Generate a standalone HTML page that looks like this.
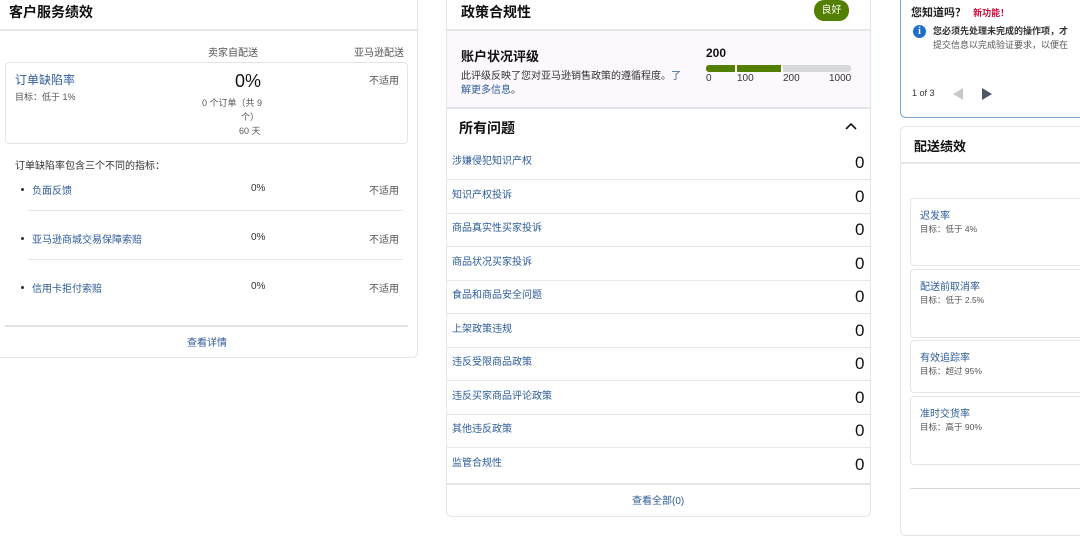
<!DOCTYPE html>
<html><head><meta charset="utf-8"><style>
*{margin:0;padding:0;box-sizing:border-box}
body{width:1080px;height:520px;overflow:hidden;background:#fff;font-family:"Liberation Sans","Noto Sans CJK SC",sans-serif;color:#111;position:relative}
.a{position:absolute;white-space:nowrap}
.card{position:absolute;background:#fff;border:1px solid #e3e6e6;border-radius:6px}
.hl{position:absolute;height:2px;background:#e3e6e6}
.ln{position:absolute;height:1px;background:#e7e7e7}
.lk{color:#2d5c99}
.s{font-size:10px;color:#555}
.t{font-size:14px;font-weight:bold;color:#111}
.box{position:absolute;border:1px solid #e3e6e6;border-radius:4px;background:#fff}
.dot{position:absolute;width:3px;height:3px;border-radius:50%;background:#333}
</style></head><body>

<!-- Left card -->
<div class="card" style="left:-6px;top:-10px;width:424px;height:368px"></div>
<div class="a t" style="left:9px;top:2px">客户服务绩效</div>
<div class="hl" style="left:-6px;top:29px;width:424px"></div>
<div class="a s" style="left:208px;top:44px">卖家自配送</div>
<div class="a s" style="left:354px;top:44px">亚马逊配送</div>
<div class="box" style="left:5px;top:62px;width:403px;height:82px"></div>
<div class="a lk" style="left:15px;top:71px;font-size:12px">订单缺陷率</div>
<div class="a" style="left:15px;top:90px;font-size:9px;color:#555">目标：低于 1%</div>
<div class="a" style="left:235px;top:71px;font-size:18px;color:#111">0%</div>
<div class="a" style="left:202px;top:96px;font-size:9px;color:#555">0 个订单（共 9</div>
<div class="a" style="left:241px;top:110px;font-size:9px;color:#555">个）</div>
<div class="a" style="left:239px;top:124px;font-size:9px;color:#555">60 天</div>
<div class="a s" style="left:369px;top:72px">不适用</div>
<div class="a" style="left:15px;top:157px;font-size:10px;color:#333">订单缺陷率包含三个不同的指标：</div>
<div class="dot" style="left:21px;top:188px"></div>
<div class="a lk" style="left:32px;top:182px;font-size:10px">负面反馈</div>
<div class="a s" style="left:251px;top:183px;color:#333">0%</div>
<div class="a s" style="left:369px;top:182px">不适用</div>
<div class="ln" style="left:28px;top:210px;width:375px"></div>
<div class="dot" style="left:21px;top:237px"></div>
<div class="a lk" style="left:32px;top:231px;font-size:10px">亚马逊商城交易保障索赔</div>
<div class="a s" style="left:251px;top:232px;color:#333">0%</div>
<div class="a s" style="left:369px;top:231px">不适用</div>
<div class="ln" style="left:28px;top:259px;width:375px"></div>
<div class="dot" style="left:21px;top:286px"></div>
<div class="a lk" style="left:32px;top:280px;font-size:10px">信用卡拒付索赔</div>
<div class="a s" style="left:251px;top:281px;color:#333">0%</div>
<div class="a s" style="left:369px;top:280px">不适用</div>
<div class="hl" style="left:5px;top:325px;width:403px;background:#e0e3e3"></div>
<div class="a lk" style="left:187px;top:334px;font-size:10px">查看详情</div>

<!-- Middle card -->
<div class="card" style="left:446px;top:-10px;width:425px;height:527px"></div>
<div class="a t" style="left:461px;top:2px">政策合规性</div>
<div class="a" style="left:814px;top:0px;width:35px;height:21px;border-radius:10px;background:#538000;color:#fff;font-size:10px;text-align:center;line-height:21px">良好</div>
<div style="position:absolute;left:447px;top:31px;width:423px;height:77px;background:#fcf8fd"></div>
<div class="hl" style="left:447px;top:29px;width:423px"></div>
<div class="a t" style="left:461px;top:46px;font-size:13px">账户状况评级</div>
<div class="a" style="left:461px;top:67px;font-size:10px;color:#333">此评级反映了您对亚马逊销售政策的遵循程度。<span class="lk">了</span></div>
<div class="a lk" style="left:461px;top:81px;font-size:10px">解更多信息<span style="color:#333">。</span></div>
<div class="a" style="left:706px;top:46px;font-size:12px;font-weight:bold">200</div>
<div style="position:absolute;left:706px;top:65px;width:29px;height:7px;background:#538000;border-radius:3px 0 0 3px"></div>
<div style="position:absolute;left:737px;top:65px;width:44px;height:7px;background:#538000"></div>
<div style="position:absolute;left:783px;top:65px;width:68px;height:7px;background:#d5d9d9;border-radius:0 3px 3px 0"></div>
<div class="a" style="left:706px;top:73px;font-size:10px;color:#333">0</div>
<div class="a" style="left:737px;top:73px;font-size:10px;color:#333">100</div>
<div class="a" style="left:783px;top:73px;font-size:10px;color:#333">200</div>
<div class="a" style="left:829px;top:73px;font-size:10px;color:#333">1000</div>
<div class="hl" style="left:447px;top:107px;width:423px"></div>
<div class="a t" style="left:459px;top:118px">所有问题</div>
<svg class="a" style="left:844px;top:121px" width="14" height="10"><path d="M2 8 L7 3 L12 8" fill="none" stroke="#111" stroke-width="1.6"/></svg>

<div class="a lk" style="left:452px;top:152px;font-size:10px">涉嫌侵犯知识产权</div><div class="a" style="left:855px;top:153px;font-size:17px">0</div>
<div class="ln" style="left:447px;top:179px;width:423px"></div>
<div class="a lk" style="left:452px;top:186px;font-size:10px">知识产权投诉</div><div class="a" style="left:855px;top:187px;font-size:17px">0</div>
<div class="ln" style="left:447px;top:213px;width:423px"></div>
<div class="a lk" style="left:452px;top:219px;font-size:10px">商品真实性买家投诉</div><div class="a" style="left:855px;top:220px;font-size:17px">0</div>
<div class="ln" style="left:447px;top:246px;width:423px"></div>
<div class="a lk" style="left:452px;top:253px;font-size:10px">商品状况买家投诉</div><div class="a" style="left:855px;top:254px;font-size:17px">0</div>
<div class="ln" style="left:447px;top:280px;width:423px"></div>
<div class="a lk" style="left:452px;top:286px;font-size:10px">食品和商品安全问题</div><div class="a" style="left:855px;top:287px;font-size:17px">0</div>
<div class="ln" style="left:447px;top:313px;width:423px"></div>
<div class="a lk" style="left:452px;top:320px;font-size:10px">上架政策违规</div><div class="a" style="left:855px;top:321px;font-size:17px">0</div>
<div class="ln" style="left:447px;top:347px;width:423px"></div>
<div class="a lk" style="left:452px;top:353px;font-size:10px">违反受限商品政策</div><div class="a" style="left:855px;top:354px;font-size:17px">0</div>
<div class="ln" style="left:447px;top:380px;width:423px"></div>
<div class="a lk" style="left:452px;top:387px;font-size:10px">违反买家商品评论政策</div><div class="a" style="left:855px;top:388px;font-size:17px">0</div>
<div class="ln" style="left:447px;top:414px;width:423px"></div>
<div class="a lk" style="left:452px;top:420px;font-size:10px">其他违反政策</div><div class="a" style="left:855px;top:421px;font-size:17px">0</div>
<div class="ln" style="left:447px;top:447px;width:423px"></div>
<div class="a lk" style="left:452px;top:454px;font-size:10px">监管合规性</div><div class="a" style="left:855px;top:455px;font-size:17px">0</div>
<div class="hl" style="left:447px;top:483px;width:423px"></div>
<div class="a lk" style="left:632px;top:492px;font-size:10px">查看全部(0)</div>

<!-- Right top card -->
<div class="card" style="left:900px;top:-10px;width:200px;height:128px;border-color:#7aa4d6"></div>
<div class="a" style="left:911px;top:4px;font-size:11px;font-weight:bold;color:#222">您知道吗？ <span style="color:#cc0c39;font-size:9px;margin-left:4px">新功能！</span></div>
<div class="a" style="left:913px;top:25px;width:13px;height:13px;border-radius:50%;background:#1f6fc9;color:#fff;font-size:10px;font-weight:bold;text-align:center;line-height:13px;font-family:'Liberation Serif',serif">i</div>
<div class="a" style="left:933px;top:24px;font-size:9px;font-weight:bold;color:#333">您必须先处理未完成的操作项，才</div>
<div class="a" style="left:933px;top:38px;font-size:9px;color:#555">提交信息以完成验证要求，以便在</div>
<div class="a" style="left:912px;top:88px;font-size:9px;color:#333">1 of 3</div>
<svg class="a" style="left:950px;top:87px" width="14" height="14"><path d="M13 1 L3 7 L13 13Z" fill="#c5cacd"/></svg>
<svg class="a" style="left:980px;top:87px" width="14" height="14"><path d="M2 1 L12 7 L2 13Z" fill="#4d5661"/></svg>

<!-- Right lower card -->
<div class="card" style="left:900px;top:126px;width:200px;height:410px"></div>
<div class="a t" style="left:914px;top:136px;font-size:13px">配送绩效</div>
<div class="hl" style="left:900px;top:162px;width:190px"></div>
<div class="box" style="left:910px;top:198px;width:180px;height:68px"></div>
<div class="a lk" style="left:920px;top:207px;font-size:10px">迟发率</div>
<div class="a" style="left:920px;top:223px;font-size:8.5px;color:#555">目标：低于 4%</div>
<div class="box" style="left:910px;top:269px;width:180px;height:69px"></div>
<div class="a lk" style="left:920px;top:278px;font-size:10px">配送前取消率</div>
<div class="a" style="left:920px;top:294px;font-size:8.5px;color:#555">目标：低于 2.5%</div>
<div class="box" style="left:910px;top:340px;width:180px;height:53px"></div>
<div class="a lk" style="left:920px;top:349px;font-size:10px">有效追踪率</div>
<div class="a" style="left:920px;top:365px;font-size:8.5px;color:#555">目标：超过 95%</div>
<div class="box" style="left:910px;top:396px;width:180px;height:69px"></div>
<div class="a lk" style="left:920px;top:405px;font-size:10px">准时交货率</div>
<div class="a" style="left:920px;top:421px;font-size:8.5px;color:#555">目标：高于 90%</div>
<div class="ln" style="left:910px;top:488px;width:180px;background:#d5d9d9"></div>
</body></html>
